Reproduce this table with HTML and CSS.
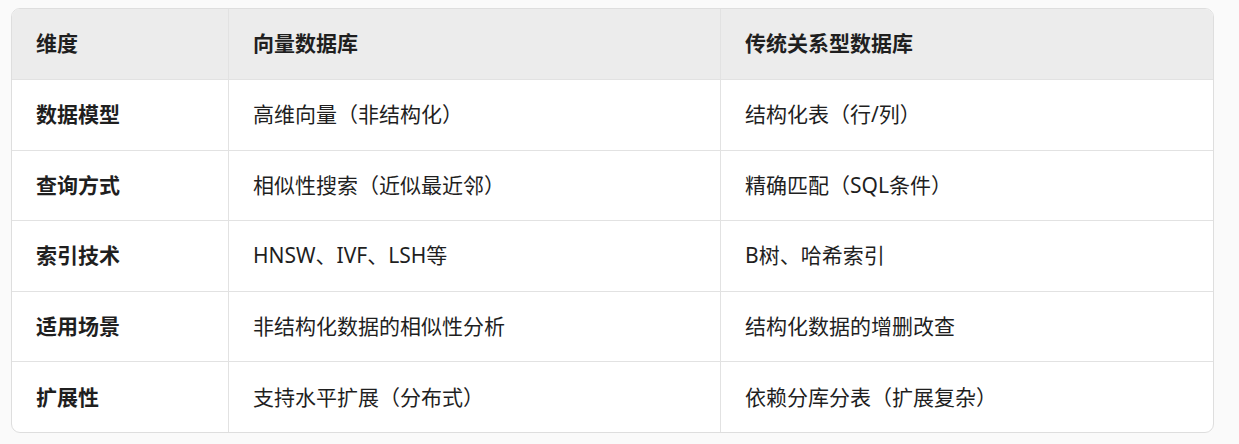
FILE: index.html
```html
<!DOCTYPE html>
<html lang="zh">
<head>
<meta charset="utf-8">
<link rel="stylesheet" href="styles.css">
</head>
<body>
<div class="wrap">
<table class="cmp">
<thead>
<tr><th class="c1">维度</th><th class="c2">向量数据库</th><th class="c3">传统关系型数据库</th></tr>
</thead>
<tbody>
<tr><th>数据模型</th><td>高维向量（非结构化）</td><td>结构化表（行/列）</td></tr>
<tr><th>查询方式</th><td>相似性搜索（近似最近邻）</td><td>精确匹配（SQL条件）</td></tr>
<tr><th>索引技术</th><td>HNSW、IVF、LSH等</td><td>B树、哈希索引</td></tr>
<tr><th>适用场景</th><td>非结构化数据的相似性分析</td><td>结构化数据的增删改查</td></tr>
<tr><th>扩展性</th><td>支持水平扩展（分布式）</td><td>依赖分库分表（扩展复杂）</td></tr>
</tbody>
</table>
</div>
</body>
</html>
```
FILE: styles.css
```css
html, body { margin: 0; padding: 0; background: #fafafa; }
body { font-family: "Noto Sans", "Noto Sans CJK SC", sans-serif; color: #1f1f1f; }
.wrap { padding: 8px 0 0 11px; }
.cmp {
  width: 1203px;
  border-collapse: separate;
  border-spacing: 0;
  border: 1px solid #dedede;
  border-radius: 9px;
  overflow: hidden;
  background: #fff;
  font-size: 21px;
  table-layout: fixed;
}
.c1 { width: 216px; }
.c2 { width: 492px; }
.cmp th, .cmp td {
  text-align: left;
  padding: 0 24px;
  height: 70.6px;
  box-sizing: border-box;
  border-top: 1px solid #e2e2e2;
  border-left: 1px solid #e2e2e2;
  vertical-align: middle;
  line-height: 1.2;
}
.cmp tr > :first-child { border-left: none; }
.cmp thead th { border-top: none; background: #ececec; height: 70px; font-weight: bold; }
.cmp tbody th { font-weight: bold; }
.cmp td { font-weight: normal; }
```
